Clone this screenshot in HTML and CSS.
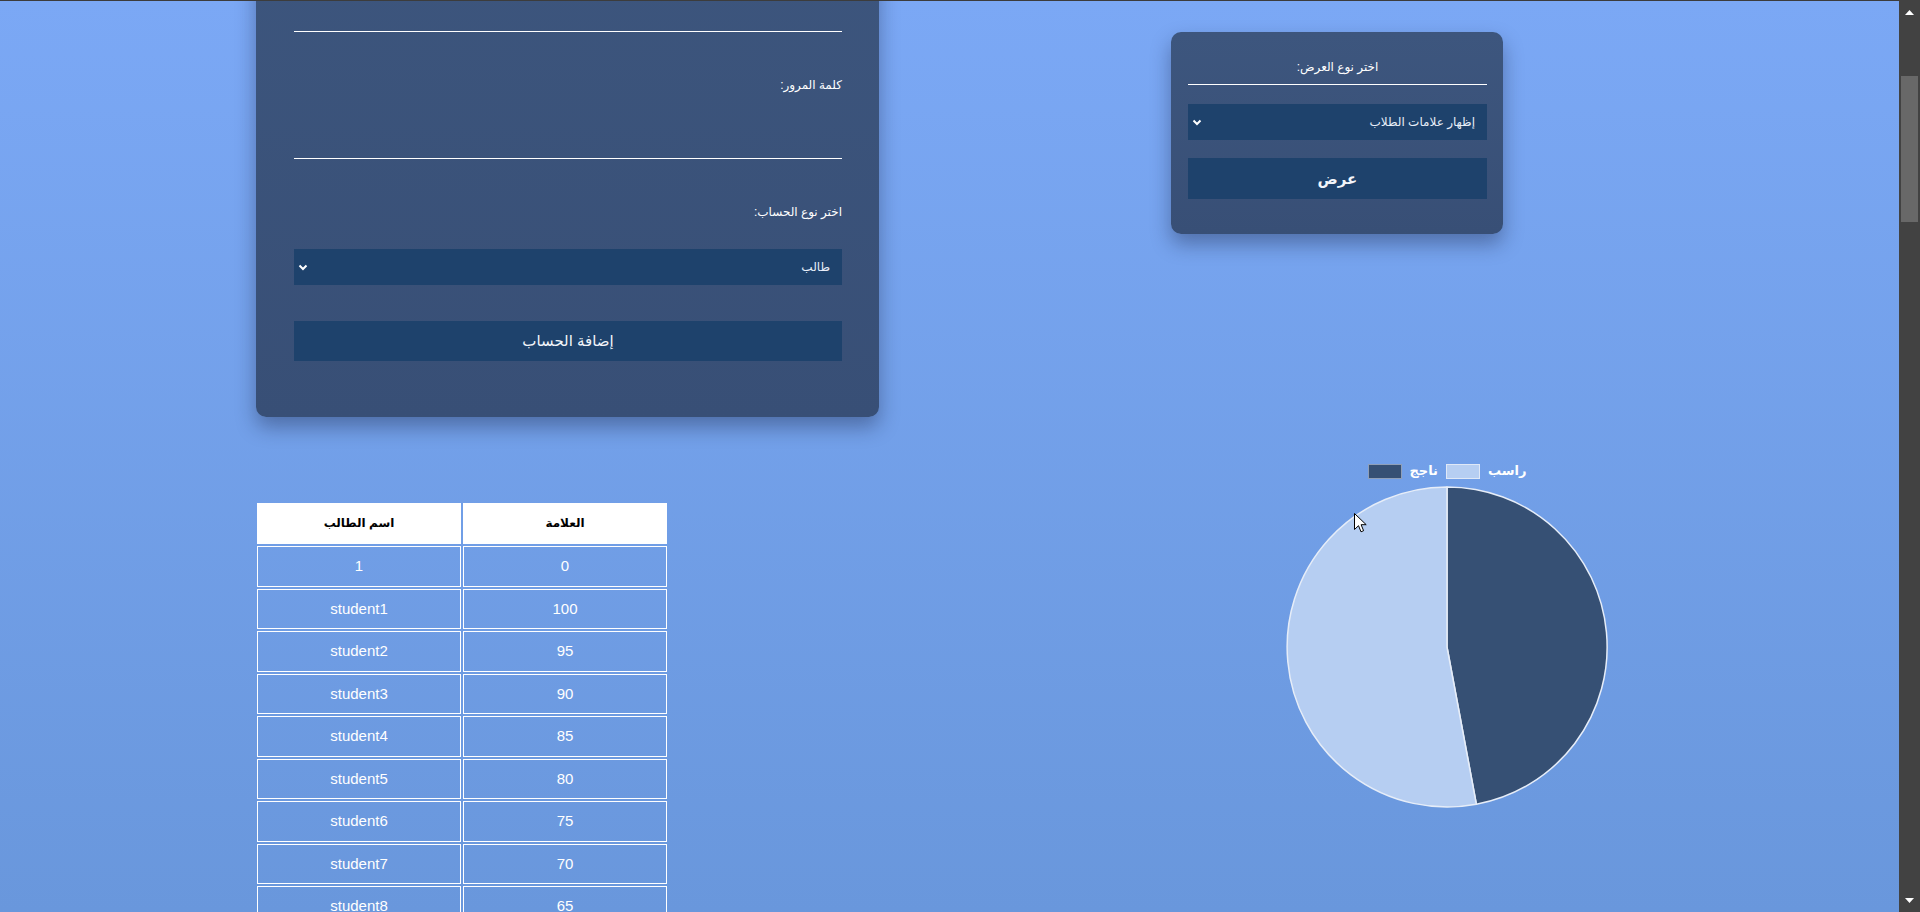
FILE: index.html
```html
<!DOCTYPE html>
<html lang="ar">
<head>
<meta charset="utf-8">
<title>لوحة التحكم</title>
<link rel="stylesheet" href="styles.css">
</head>
<body>
<div class="viewport">
  <div class="page" dir="rtl">
    <section class="col col-main">
      <div class="card view-card">
        <label class="view-label">اختر نوع العرض:</label>
        <div class="select">
          <span>إظهار علامات الطلاب</span>
          <svg class="chev" width="10" height="7" viewBox="0 0 10 7"><path d="M1.5 1.5 L5 5 L8.5 1.5" fill="none" stroke="#fff" stroke-width="2"/></svg>
        </div>
        <button class="btn btn-view">عرض</button>
      </div>
      <div class="chart">
        <div class="legend">
          <span class="lg-text">راسب</span>
          <span class="lg-box lg-light"></span>
          <span class="lg-text">ناجج</span>
          <span class="lg-box lg-dark"></span>
        </div>
        <svg class="pie" width="330" height="330" viewBox="0 0 330 330">
          <path d="M165 165 L165 5 A160 160 0 0 1 194.4 322.3 Z" fill="#365074" stroke="#e6edf8" stroke-width="1.5" stroke-linejoin="round"/>
          <path d="M165 165 L194.4 322.3 A160 160 0 1 1 165 5 Z" fill="#b6cef2" stroke="#e6edf8" stroke-width="1.5" stroke-linejoin="round"/>
        </svg>
        <svg class="cursor" width="13" height="20" viewBox="0 0 13 20"><path d="M0.5 0.5 L0.5 16.5 L4.5 12.7 L7 18.8 L9.6 17.7 L7.1 11.7 L12.2 11.7 Z" fill="#fff" stroke="#000" stroke-width="1" stroke-linejoin="round"/></svg>
      </div>
    </section>
    <section class="col col-side">
      <div class="card account-card">
        <label class="field-label">اسم المستخدم:</label>
        <div class="input"></div>
        <label class="field-label">كلمة المرور:</label>
        <div class="input"></div>
        <label class="field-label">اختر نوع الحساب:</label>
        <div class="select select-account">
          <span>طالب</span>
          <svg class="chev" width="10" height="7" viewBox="0 0 10 7"><path d="M1.5 1.5 L5 5 L8.5 1.5" fill="none" stroke="#fff" stroke-width="2"/></svg>
        </div>
        <button class="btn btn-add">إضافة الحساب</button>
      </div>
      <table class="grades">
        <thead>
          <tr><th>العلامة</th><th>اسم الطالب</th></tr>
        </thead>
        <tbody>
          <tr><td>0</td><td>1</td></tr>
          <tr><td>100</td><td>student1</td></tr>
          <tr><td>95</td><td>student2</td></tr>
          <tr><td>90</td><td>student3</td></tr>
          <tr><td>85</td><td>student4</td></tr>
          <tr><td>80</td><td>student5</td></tr>
          <tr><td>75</td><td>student6</td></tr>
          <tr><td>70</td><td>student7</td></tr>
          <tr><td>65</td><td>student8</td></tr>
          <tr><td>60</td><td>student9</td></tr>
          <tr><td>55</td><td>student10</td></tr>
        </tbody>
      </table>
    </section>
  </div>
</div>
<div class="scrollbar">
  <div class="sb-btn sb-up"><svg width="9" height="5" viewBox="0 0 9 5"><path d="M0 5 L4.5 0 L9 5 Z" fill="#fff"/></svg></div>
  <div class="sb-track"><div class="sb-thumb"></div></div>
  <div class="sb-btn sb-down"><svg width="9" height="5" viewBox="0 0 9 5"><path d="M0 0 L4.5 5 L9 0 Z" fill="#fff"/></svg></div>
</div>
</body>
</html>
```

FILE: styles.css
```css
html, body {
  margin: 0;
  padding: 0;
}

body {
  display: flex;
  height: 912px;
  overflow: hidden;
  background: #424242;
  font-family: "Liberation Sans", "DejaVu Sans", Arial, sans-serif;
}

.viewport {
  flex: 1;
  overflow: hidden;
  border-top: 1px solid #3c3c3c;
  background: linear-gradient(180deg, #7ba8f5 0%, #6997dc 100%);
}

.page {
  display: grid;
  grid-template-columns: 949px 950px;
  align-items: start;
  margin-top: -93px;
}

.col-main {
  display: flex;
  flex-direction: column;
  align-items: flex-start;
}

.card {
  box-sizing: border-box;
  background: linear-gradient(180deg, #3d567e 0%, #384f76 100%);
  border-radius: 10px;
  box-shadow: 0 10px 20px rgba(20, 30, 60, 0.38);
  color: #fff;
}

/* view selection card */
.view-card {
  margin-top: 124px;
  margin-right: 396px;
  width: 332px;
  padding: 27px 16px 35px 17px;
}

.view-label {
  display: block;
  text-align: center;
  font-size: 12px;
  line-height: 16px;
  padding-bottom: 9px;
  border-bottom: 1px solid #fff;
}

.select {
  display: flex;
  align-items: center;
  justify-content: space-between;
  height: 36px;
  padding: 0 12px 0 4px;
  background: #1e426c;
  color: #e8eef8;
  font-size: 12px;
}

.view-card .select {
  margin-top: 19px;
}

.chev {
  display: block;
}

.btn {
  display: block;
  width: 100%;
  height: 40px;
  border: none;
  background: #1e426c;
  color: #f2f5fa;
  font-family: inherit;
  font-size: 15px;
  padding: 0;
}

.btn-view {
  margin-top: 18px;
  height: 41px;
  font-weight: bold;
}

/* chart */
.chart {
  position: relative;
  margin-top: 229px;
  margin-right: 287px;
  width: 330px;
}

.legend {
  display: flex;
  justify-content: center;
  align-items: center;
  gap: 8px;
  height: 16px;
}

.lg-text {
  color: #fff;
  font-weight: bold;
  font-size: 13px;
  line-height: 16px;
}

.lg-box {
  box-sizing: border-box;
  width: 34px;
  height: 15px;
  border: 1px solid #dfe8f7;
}

.lg-light {
  background: #b6cef2;
}

.lg-dark {
  background: #365074;
  border-color: #8f9fb8;
}

.pie {
  display: block;
  margin-top: 3px;
}

.cursor {
  position: absolute;
  left: 72px;
  top: 50px;
}

/* account card */
.account-card {
  margin-right: 71px;
  width: 623px;
  padding: 42px 37px 56px 38px;
}

.field-label {
  display: block;
  font-size: 12px;
  line-height: 16px;
  margin-top: 45px;
  margin-bottom: 25px;
}

.field-label:first-child {
  margin-top: 0;
}

.input {
  height: 40px;
  border-bottom: 1px solid #fff;
}

.select-account {
  margin-top: 29px;
}

.btn-add {
  margin-top: 36px;
}

/* grades table */
.grades {
  margin-top: 84px;
  margin-right: 281px;
  width: 414px;
  table-layout: fixed;
  border-collapse: separate;
  border-spacing: 2px;
}

.grades th,
.grades td {
  border: 1px solid #fff;
  text-align: center;
}

.grades th {
  background: #fff;
  color: #000;
  font-size: 12px;
  font-weight: bold;
  line-height: 15px;
  padding: 12px 4px;
}

.grades td {
  color: #fff;
  font-size: 15px;
  line-height: 18.5px;
  padding: 10px 4px;
}

/* scrollbar */
.scrollbar {
  width: 21px;
  display: flex;
  flex-direction: column;
  background: #424242;
}

.sb-btn {
  height: 21px;
  display: flex;
  justify-content: center;
  align-items: center;
}

.sb-up {
  padding-top: 4px;
  box-sizing: border-box;
}

.sb-down {
  padding-bottom: 2px;
  box-sizing: border-box;
}

.sb-track {
  flex: 1;
}

.sb-thumb {
  margin: 55px 2px 0 2px;
  height: 146px;
  background: #686868;
}
```
